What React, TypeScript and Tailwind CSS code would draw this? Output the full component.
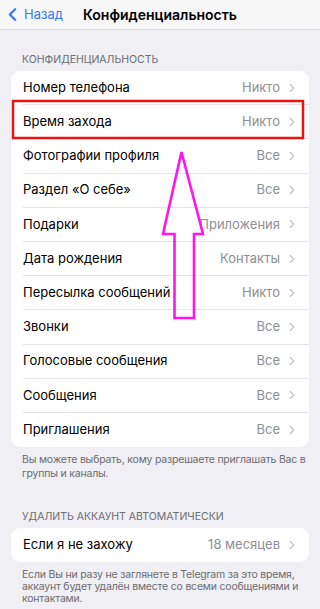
import { ChevronLeft, ChevronRight } from "lucide-react";

type Row = { label: string; value: string };

const privacyRows: Row[] = [
  { label: "Номер телефона", value: "Никто" },
  { label: "Время захода", value: "Никто" },
  { label: "Фотографии профиля", value: "Все" },
  { label: "Раздел «О себе»", value: "Все" },
  { label: "Подарки", value: "Приложения" },
  { label: "Дата рождения", value: "Контакты" },
  { label: "Пересылка сообщений", value: "Никто" },
  { label: "Звонки", value: "Все" },
  { label: "Голосовые сообщения", value: "Все" },
  { label: "Сообщения", value: "Все" },
  { label: "Приглашения", value: "Все" },
];

function SettingsRow({ row, last }: { row: Row; last: boolean }) {
  return (
    <div className="flex h-[34.2px] items-center pl-[12px]">
      <div
        className={`flex h-full flex-1 items-center pr-[10px] ${
          last ? "" : "border-b border-[#e3e3e8]"
        }`}
      >
        <span className="flex-1 text-[13px] text-black">{row.label}</span>
        <span className="text-[13px] text-[#8e8e93]">{row.value}</span>
        <ChevronRight className="ml-[5px] h-[14px] w-[14px] text-[#c4c4c8]" strokeWidth={2} />
      </div>
    </div>
  );
}

export default function App() {
  return (
    <div
      className="relative h-[609px] w-[320px] overflow-hidden bg-[#efeff4]"
      style={{ fontFamily: "Inter, 'Noto Sans', sans-serif" }}
    >
      {/* Nav bar */}
      <div className="relative flex h-[30px] items-center border-b border-[#dcdce0] bg-[#f7f7f7]">
        <div className="flex items-center pl-[2px] text-[#3478f6]">
          <ChevronLeft className="h-[21px] w-[21px]" strokeWidth={2.6} />
          <span className="ml-[1px] text-[13px]">Назад</span>
        </div>
        <div className="pointer-events-none absolute inset-x-0 text-center text-[14px] font-semibold text-black">
          Конфиденциальность
        </div>
      </div>

      {/* Privacy section */}
      <div className="px-[22px] pt-[22px] pb-[3px] text-[10.5px] uppercase leading-[16px] text-[#6d6d72]">
        Конфиденциальность
      </div>
      <div className="mx-[11px] overflow-hidden rounded-[9px] bg-white">
        {privacyRows.map((r, i) => (
          <SettingsRow key={r.label} row={r} last={i === privacyRows.length - 1} />
        ))}
      </div>
      <p className="pl-[22px] pr-[14px] pt-[6px] text-[10.5px] leading-[13.5px] tracking-[-0.2px] text-[#6d6d72]">
        Вы можете выбрать, кому разрешаете приглашать Вас в группы и каналы.
      </p>

      {/* Auto delete section */}
      <div className="px-[22px] pt-[29px] pb-[3px] text-[10.5px] uppercase leading-[16px] text-[#6d6d72]">
        Удалить аккаунт автоматически
      </div>
      <div className="mx-[11px] overflow-hidden rounded-[9px] bg-white">
        <SettingsRow row={{ label: "Если я не захожу", value: "18 месяцев" }} last />
      </div>
      <p className="pl-[22px] pr-[14px] pt-[7px] text-[10.5px] leading-[12px] tracking-[-0.2px] text-[#6d6d72]">
        Если Вы ни разу не заглянете в Telegram за это время, аккаунт будет удалён вместе со всеми
        сообщениями и контактами.
      </p>

      {/* Annotation overlay */}
      <svg className="pointer-events-none absolute left-0 top-0" width="320" height="609" viewBox="0 0 320 609">
        <rect x="13" y="101" width="290" height="37" fill="none" stroke="#ee1111" strokeWidth="2.5" />
        <polygon
          points="181.5,152 203,234 194,234 194,318 174.5,318 174.5,234 163,234"
          fill="none"
          stroke="#ff14f0"
          strokeWidth="2.6"
          strokeLinejoin="miter"
        />
      </svg>
    </div>
  );
}
